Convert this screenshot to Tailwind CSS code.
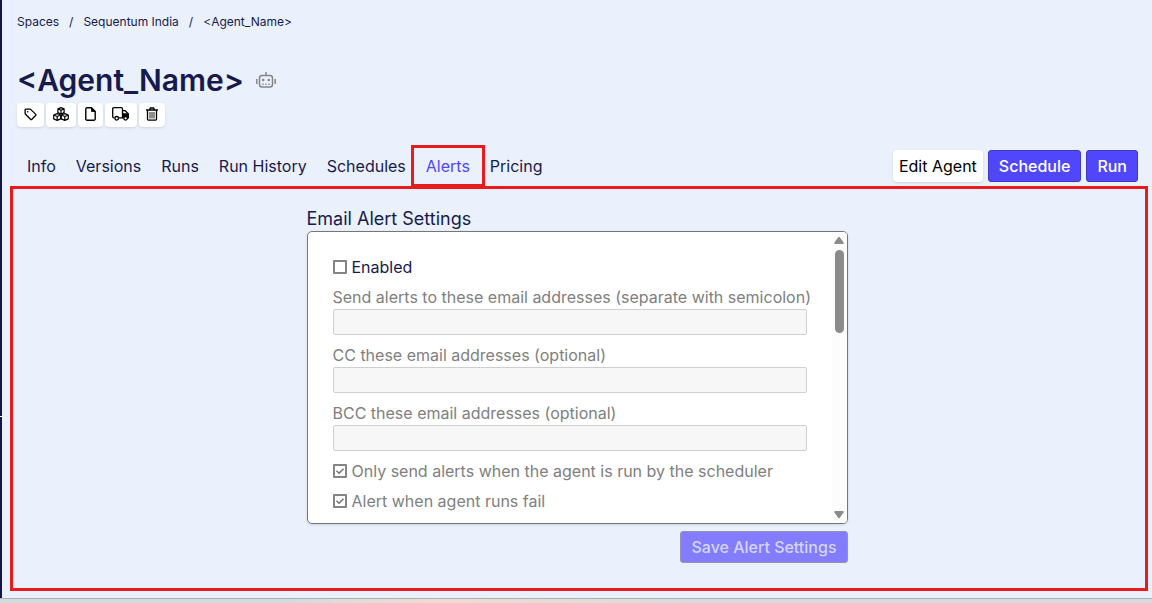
<!DOCTYPE html>
<html lang="en">
<head>
    <meta charset="UTF-8">
    <meta name="viewport" content="width=device-width, initial-scale=1.0">
    <title>Agent - Alerts</title>
    <script src="https://cdn.jsdelivr.net/npm/@tailwindcss/browser@4"></script>
</head>
<body class="h-screen flex flex-col overflow-hidden bg-[#eaf1fd] text-[#171a4d] font-['Inter',sans-serif] text-base">
    <div class="flex flex-1 min-h-0">
        <!-- Collapsed sidebar edge -->
        <aside class="w-[2px] shrink-0 flex flex-col bg-[#12144a]">
            <div class="mt-auto h-px bg-white"></div>
            <div class="h-[181px]"></div>
        </aside>

        <main class="flex-1 min-w-0 flex flex-col pt-3 pb-[7px]">
            <nav class="pl-[15px] text-xs leading-5" aria-label="Breadcrumb">
                <ol class="flex gap-[10px]">
                    <li><a href="#">Spaces</a></li>
                    <li>/</li>
                    <li><a href="#">Sequentum India</a></li>
                    <li>/</li>
                    <li><a href="#">&lt;Agent_Name&gt;</a></li>
                </ol>
            </nav>

            <header class="mt-7 pl-[15px]">
                <div class="flex items-center gap-3">
                    <h1 class="text-[30px] leading-10 font-semibold">&lt;Agent_Name&gt;</h1>
                    <svg class="w-5 h-4 text-[#858585]" viewBox="0 0 20 16" fill="none" stroke="currentColor" stroke-width="1.5">
                        <path d="M10 0v3.5"/>
                        <rect x="3.5" y="3.5" width="13" height="11.5" rx="2.5"/>
                        <path d="M.8 7v5M19.2 7v5"/>
                        <path d="M6 12.2h2M9 12.2h2M12 12.2h2" stroke-width="1"/>
                        <circle cx="7.2" cy="8" r="1.3" fill="currentColor" stroke="none"/>
                        <circle cx="12.8" cy="8" r="1.3" fill="currentColor" stroke="none"/>
                    </svg>
                </div>

                <!-- Quick actions -->
                <div class="mt-[3px] flex gap-[2px] text-black">
                    <button type="button" aria-label="Tags" class="w-[27px] h-6 pb-[2px] flex items-center justify-center rounded-sm bg-white shadow-sm">
                        <svg class="w-[13px] h-[13px]" viewBox="0 0 14 14" fill="none" stroke="currentColor" stroke-width="1.4" stroke-linejoin="round">
                            <path d="M1.2 2v4.2L7 12.1a1.1 1.1 0 0 0 1.5 0l4-4a1.1 1.1 0 0 0 0-1.5L6.8 1.2H2a.8.8 0 0 0-.8.8z"/>
                            <circle cx="4" cy="4" r=".8" fill="currentColor" stroke="none"/>
                        </svg>
                    </button>
                    <button type="button" aria-label="Dependencies" class="w-[30px] h-6 pb-[2px] flex items-center justify-center rounded-sm bg-white shadow-sm">
                        <svg class="w-4 h-[14px]" viewBox="0 0 16 14" fill="none" stroke="currentColor" stroke-width="1.2" stroke-linejoin="round">
                            <path d="M8 .6l3.100 1.300v3.700L8 7 4.900 5.600V1.900zM4.900 1.900L8 3.200l3.100-1.300M8 3.200V7"/>
                            <path d="M4.200 6.600l3.500 1.400v3.900l-3.500 1.500-3.500-1.500V8zM.7 8l3.500 1.500L7.700 8M4.200 9.500v3.900"/>
                            <path d="M11.800 6.600l3.500 1.400v3.900l-3.500 1.500-3.500-1.500V8zM8.300 8l3.500 1.500L15.300 8M11.800 9.500v3.900"/>
                        </svg>
                    </button>
                    <button type="button" aria-label="Files" class="w-[25px] h-6 pb-[2px] flex items-center justify-center rounded-sm bg-white shadow-sm">
                        <svg class="w-[11px] h-[14px]" viewBox="0 0 11 14" fill="none" stroke="currentColor" stroke-width="1.4" stroke-linejoin="round">
                            <path d="M6.5.8H2A1.2 1.2 0 0 0 .8 2v10A1.2 1.2 0 0 0 2 13.200h7a1.2 1.2 0 0 0 1.2-1.2V4.5z"/>
                            <path d="M6.5.8v3.700h3.700z" fill="currentColor" stroke-width=".8"/>
                        </svg>
                    </button>
                    <button type="button" aria-label="Delivery" class="w-8 h-6 pb-[2px] flex items-center justify-center rounded-sm bg-white shadow-sm">
                        <svg class="w-[18px] h-[14px]" viewBox="0 0 18 14" fill="none" stroke="currentColor" stroke-width="1.3">
                            <path d="M2.5 10.800h-.6A1.200 1.200 0 0 1 .7 9.600V1.900A1.200 1.200 0 0 1 1.900.7h7.400a1.200 1.200 0 0 1 1.200 1.200v8.900H7"/>
                            <path d="M10.500 3.700h2.700l3.200 3.200v3.900h-.5M10.500 10.800h1"/>
                            <path d="M10.500 6.600h6v4h-1l-1.600-1.200-1.800.2-1.100 1.200h-.5z" fill="currentColor" stroke-width=".6"/>
                            <circle cx="4.700" cy="11.300" r="1.800" fill="white"/>
                            <circle cx="13.600" cy="11.300" r="1.800" fill="white"/>
                        </svg>
                    </button>
                    <button type="button" aria-label="Delete" class="w-[26px] h-6 pb-[2px] flex items-center justify-center rounded-sm bg-white shadow-sm">
                        <svg class="w-3 h-[14px]" viewBox="0 0 12 14" fill="none" stroke="currentColor" stroke-width="1.3">
                            <path d="M0 3h12M3.500 3l.8-2h3.400l.8 2"/>
                            <path d="M1.500 3v9a1.200 1.200 0 0 0 1.200 1.200h6.600a1.200 1.200 0 0 0 1.200-1.200V3"/>
                            <path d="M4 5v6.500M6 5v6.500M8 5v6.500" stroke-width=".9"/>
                        </svg>
                    </button>
                </div>
            </header>

            <div class="mt-[23px] mb-1 pl-[15px] pr-[14px] flex items-center">
                <nav class="flex" aria-label="Agent">
                    <a href="#" class="px-[10px] py-1">Info</a>
                    <a href="#" class="px-[10px] py-1">Versions</a>
                    <a href="#" class="px-[10px] py-1">Runs</a>
                    <a href="#" class="px-[10px] py-1">Run History</a>
                    <a href="#" class="px-[10px] py-1">Schedules</a>
                    <a href="#" class="relative px-[10px] py-1 text-[#5046f5]" aria-current="page">Alerts
                        <span class="absolute -inset-[5px] border-3 border-[#e81c1c]"></span>
                    </a>
                    <a href="#" class="px-[10px] py-1">Pricing</a>
                </nav>
                <div class="ml-auto flex gap-[5px]">
                    <button type="button" class="h-8 px-[6px] rounded-sm bg-white text-black shadow-sm">Edit Agent</button>
                    <button type="button" class="h-8 px-[10px] rounded-[3px] border border-[#4038c8] bg-[#5046fb] text-white font-medium">Schedule</button>
                    <button type="button" class="h-8 px-[10px] rounded-[3px] border border-[#4038c8] bg-[#5046fb] text-white font-medium">Run</button>
                </div>
            </div>

            <!-- Alerts tab -->
            <section class="flex-1 min-h-0 ml-2 mr-1 pt-[18px] pr-1 border-3 border-[#e81c1c]">
                <form class="w-full max-w-[541px] mx-auto">
                    <h2 class="text-lg leading-6">Email Alert Settings</h2>
                    <div class="h-[293px] flex rounded-[5px] border border-[#767676] bg-white shadow overflow-hidden">
                        <div class="flex-1 min-w-0 flex flex-col pt-[23px] px-[25px] text-[#808080]">
                            <label class="flex items-center gap-[5px] leading-6 text-[#171a4d]">
                                <input type="checkbox" class="appearance-none w-[14px] h-[14px] rounded-[1px] border-2 border-[#858585] bg-white">
                                Enabled
                            </label>
                            <label for="to" class="mt-[6px] leading-6 whitespace-nowrap">Send alerts to these email addresses (separate with semicolon)</label>
                            <input id="to" type="text" disabled class="h-[26px] px-2 rounded-xs border border-[#cfcfcf] bg-[#f7f7f7]">
                            <label for="cc" class="mt-2 leading-6">CC these email addresses (optional)</label>
                            <input id="cc" type="text" disabled class="h-[26px] px-2 rounded-xs border border-[#cfcfcf] bg-[#f7f7f7]">
                            <label for="bcc" class="mt-2 leading-6">BCC these email addresses (optional)</label>
                            <input id="bcc" type="text" disabled class="h-[26px] px-2 rounded-xs border border-[#cfcfcf] bg-[#f7f7f7]">
                            <label class="mt-2 flex items-center gap-[5px] leading-6">
                                <span class="grid w-[14px] h-[14px]">
                                    <input type="checkbox" checked disabled class="appearance-none col-start-1 row-start-1 w-[14px] h-[14px] rounded-[1px] border-2 border-[#858585] bg-white">
                                    <svg class="col-start-1 row-start-1 w-[14px] h-[14px] text-[#707070]" viewBox="0 0 14 14" fill="none" stroke="currentColor" stroke-width="1.5"><path d="M3.5 6.8l2.500 2.500 4.500-4.500"/></svg>
                                </span>
                                Only send alerts when the agent is run by the scheduler
                            </label>
                            <label class="mt-[6px] flex items-center gap-[5px] leading-6">
                                <span class="grid w-[14px] h-[14px]">
                                    <input type="checkbox" checked disabled class="appearance-none col-start-1 row-start-1 w-[14px] h-[14px] rounded-[1px] border-2 border-[#858585] bg-white">
                                    <svg class="col-start-1 row-start-1 w-[14px] h-[14px] text-[#707070]" viewBox="0 0 14 14" fill="none" stroke="currentColor" stroke-width="1.5"><path d="M3.5 6.8l2.500 2.500 4.500-4.500"/></svg>
                                </span>
                                Alert when agent runs fail
                            </label>
                        </div>
                        <!-- Scrollbar -->
                        <div class="w-[15px] shrink-0 flex flex-col items-center py-1 bg-[#fcfcfc] text-[#8b8b8b]" aria-hidden="true">
                            <svg class="w-[10px] h-2" viewBox="0 0 10 8" fill="currentColor"><path d="M4.200 1.200a1 1 0 0 1 1.600 0l3.800 5.200a1 1 0 0 1-.8 1.600H1.200a1 1 0 0 1-.8-1.600z"/></svg>
                            <div class="mt-[6px] w-[9px] h-[83px] rounded-full bg-[#8b8b8b]"></div>
                            <svg class="mt-auto w-[10px] h-2 rotate-180" viewBox="0 0 10 8" fill="currentColor"><path d="M4.200 1.200a1 1 0 0 1 1.600 0l3.800 5.200a1 1 0 0 1-.8 1.600H1.200a1 1 0 0 1-.8-1.600z"/></svg>
                        </div>
                    </div>
                    <div class="mt-[7px] flex justify-end">
                        <button type="submit" disabled class="h-8 px-[10px] rounded-[3px] border border-[#9593b8] bg-[#837cfc] text-[#d3d5f3] font-medium">Save Alert Settings</button>
                    </div>
                </form>
            </section>
        </main>
    </div>

    <!-- Window bottom edge -->
    <div class="h-[5px] shrink-0 border-t border-[#a9b0b8] bg-linear-to-r from-[#d3dcdc] from-25% via-[#efdcd2] via-38% to-[#d6dcdc] to-60%"></div>
</body>
</html>
